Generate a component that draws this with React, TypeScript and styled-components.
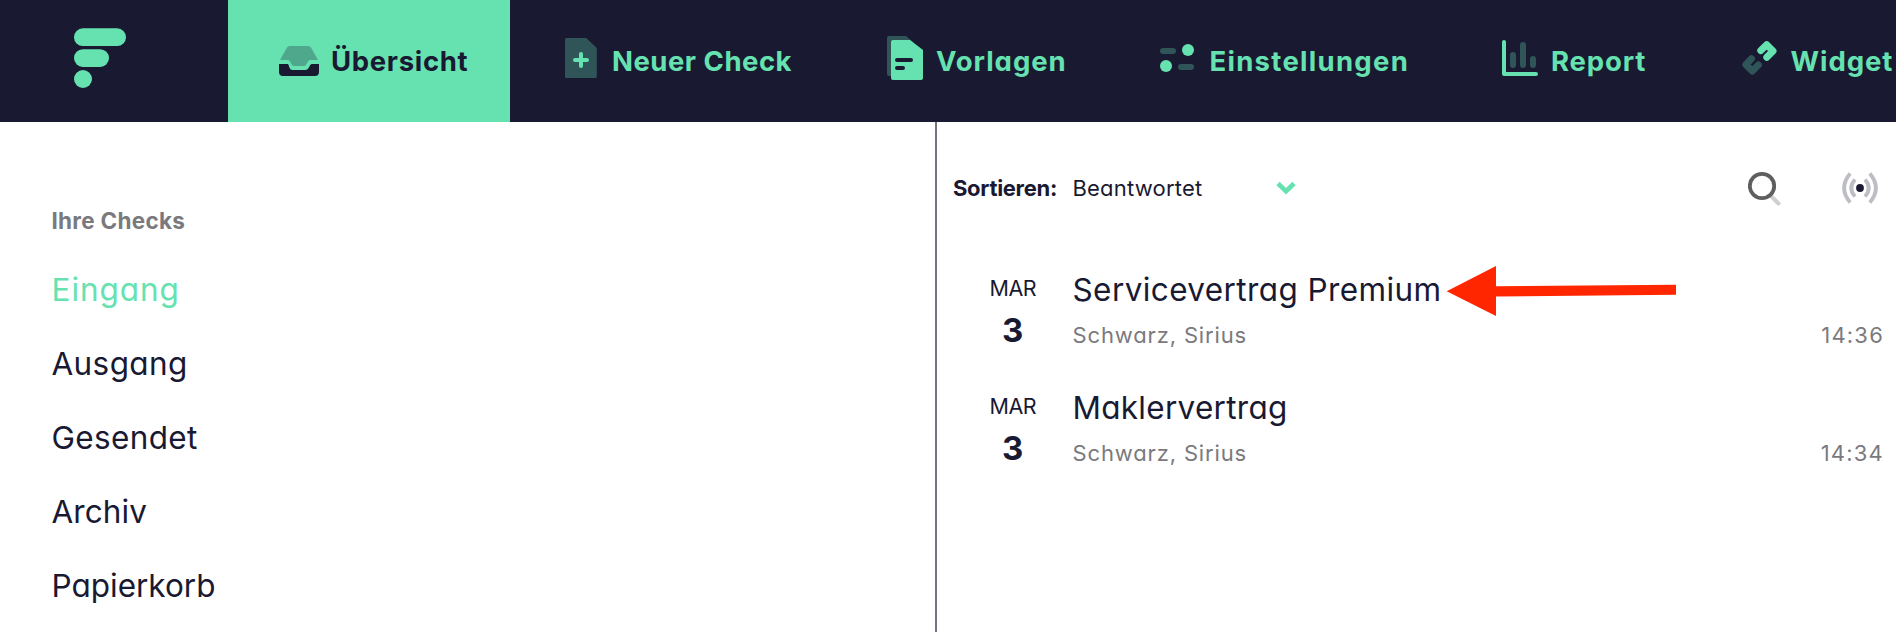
import React from 'react';
import styled, { createGlobalStyle } from 'styled-components';

const navy = '#191932';
const green = '#66e2b0';
const muted = '#2f5558';
const grey = '#7a7a7e';

const GlobalStyle = createGlobalStyle`
  * { box-sizing: border-box; }
  body {
    margin: 0;
    background: #fff;
    color: ${navy};
    font-family: Inter, "Liberation Sans", sans-serif;
    font-feature-settings: "cv11";
    overflow: hidden;
  }
`;

const Page = styled.div`
  display: flex;
  flex-direction: column;
  width: 1896px;
  height: 632px;
  overflow: hidden;
`;

const Header = styled.header`
  display: flex;
  flex: none;
  height: 122px;
  background: ${navy};
  overflow: hidden;
`;

const LogoBox = styled.div`
  flex: none;
  width: 228px;
  padding: 28px 0 0 74px;
`;

const Tab = styled.a<{ $width: number; $pad: number; $gap: number; $active?: boolean }>`
  display: flex;
  flex: none;
  align-items: center;
  width: ${p => p.$width}px;
  padding-left: ${p => p.$pad}px;
  gap: ${p => p.$gap}px;
  background: ${p => (p.$active ? green : 'transparent')};
  color: ${p => (p.$active ? navy : green)};
  white-space: nowrap;
  svg { flex: none; }
`;

const TabLabel = styled.span<{ $track: number }>`
  padding-top: 1px;
  font-size: 27.5px;
  font-weight: 700;
  line-height: 41px;
  letter-spacing: ${p => p.$track}px;
`;

const Body = styled.main`
  display: flex;
  flex: 1;
  min-height: 0;
`;

const Sidebar = styled.aside`
  flex: none;
  width: 937px;
  padding: 79px 0 0 51.5px;
  border-right: 2px solid #74747f;
`;

const SidebarTitle = styled.div`
  margin-bottom: 12px;
  color: ${grey};
  font-size: 22.5px;
  font-weight: 700;
  line-height: 40px;
  letter-spacing: 0.27px;
`;

const Folder = styled.div<{ $track: number; $active?: boolean }>`
  color: ${p => (p.$active ? green : navy)};
  font-size: 31.5px;
  line-height: 74px;
  letter-spacing: ${p => p.$track}px;
`;

const Content = styled.section`
  flex: 1;
  padding: 0 12px 0 16px;
`;

const Toolbar = styled.div`
  display: flex;
  align-items: center;
  height: 131px;
  margin-bottom: 7px;
  font-size: 22px;
  line-height: 30px;
`;

const SortLabel = styled.span`
  width: 119.5px;
  font-weight: 700;
  letter-spacing: -0.3px;
`;

const SortValue = styled.span`
  width: 203.5px;
  letter-spacing: 0.2px;
`;

const Tools = styled.div`
  display: flex;
  align-items: center;
  gap: 61px;
  margin-left: auto;
  padding-right: 6px;
`;

const Row = styled.article`
  position: relative;
  display: flex;
  height: 118px;
`;

const DateBox = styled.div`
  width: 119.5px;
  text-align: center;
`;

const Month = styled.div`
  font-size: 21.5px;
  line-height: 56px;
  letter-spacing: -0.6px;
`;

const Day = styled.div`
  font-size: 33px;
  font-weight: 700;
  line-height: 28px;
`;

const Info = styled.div`
  flex: 1;
`;

const Title = styled.div<{ $track: number }>`
  font-size: 31.5px;
  line-height: 60px;
  letter-spacing: ${p => p.$track}px;
`;

const Detail = styled.div`
  display: flex;
  justify-content: space-between;
  color: ${grey};
  font-size: 22px;
  line-height: 30px;
`;

const Person = styled.span`
  letter-spacing: 0.85px;
`;

const Time = styled.span`
  letter-spacing: 1.2px;
`;

const Arrow = styled.svg`
  position: absolute;
  left: 493px;
  top: 6px;
`;

const InboxIcon = () => (
  <svg width="40" height="52" viewBox="0 0 40 52">
    <path d="M10.5 11h19q1.6 0 2.5 1.5L39 25h-7.5q-1.7 0-2.4 1.3l-1.8 3.2q-.8 1.5-2.5 1.5h-9.6q-1.7 0-2.5-1.5l-1.8-3.2Q10.200 25 8.500 25H1L8 12.500Q8.900 11 10.500 11z" fill="#4fa88c" />
    <path d="M0 29h8.300q1 0 1.400 1.200l.7 2.300Q11.200 35 13.500 35h13q2 0 2.900-1.700l1.700-3q.7-1.300 2-1.300H40v8q0 4-4 4H4q-4 0-4-4z" fill={navy} />
  </svg>
);

const NewIcon = () => (
  <svg width="32" height="52" viewBox="0 0 32 52">
    <path d="M1.500 3H20l10 10v28.500q0 1.500-1.500 1.500h-27Q0 43 0 41.500v-37Q0 3 1.500 3z" fill={muted} transform="scale(1.060 1)" />
    <path d="M16 19v12M10 25h12" stroke={green} strokeWidth="4" strokeLinecap="round" />
  </svg>
);

const TemplateIcon = () => (
  <svg width="36" height="52" viewBox="0 0 36 52">
    <path d="M2 1h17l8 7v33H2q-2 0-2-2V3q0-2 2-2z" fill={muted} />
    <path d="M6 5h17l13 10v28q0 2-2 2H6q-2 0-2-2V7q0-2 2-2z" fill={green} />
    <path d="M10 25h14M10 33h6" stroke={navy} strokeWidth="4" strokeLinecap="round" />
  </svg>
);

const SettingsIcon = () => (
  <svg width="34" height="52" viewBox="0 0 34 52">
    <rect x="0" y="13" width="16" height="6" rx="3" fill={muted} />
    <rect x="18" y="29" width="16" height="6" rx="3" fill={muted} />
    <circle cx="28" cy="15" r="6" fill={green} />
    <circle cx="6" cy="31" r="6" fill={green} />
  </svg>
);

const ReportIcon = () => (
  <svg width="36" height="52" viewBox="0 0 36 52">
    <path d="M11 20v10M21 10v20M31 24v6" stroke={muted} strokeWidth="6" strokeLinecap="round" />
    <path d="M2 7v32h32" fill="none" stroke={green} strokeWidth="4" strokeLinecap="round" strokeLinejoin="round" />
  </svg>
);

const LinkIcon = () => (
  <svg width="36" height="52" viewBox="0 0 36 52" fill="none" strokeWidth="7" strokeLinecap="round" strokeLinejoin="round">
    <path d="M18.800 15.500L24.700 9.700L31 16L24.800 22.200" stroke={green} />
    <path d="M9.500 23.700L3.900 29.700L10.300 36L16.400 29.900" stroke={muted} />
  </svg>
);

const Chevron = () => (
  <svg width="20" height="14" viewBox="0 0 20 14">
    <path d="M2 2.500l8 7.700 8-7.700" fill="none" stroke={green} strokeWidth="4.600" />
  </svg>
);

const SearchIcon = () => (
  <svg width="33" height="36" viewBox="0 0 33 36">
    <path d="M23.500 26.500l7 7" stroke="#cfcfcf" strokeWidth="4" strokeLinecap="round" />
    <circle cx="14" cy="16" r="12.200" fill="none" stroke="#5f5f5f" strokeWidth="3.800" />
  </svg>
);

const LiveIcon = () => (
  <svg width="36" height="32" viewBox="0 0 36 32">
    <g fill="none" stroke="#bdbdc6" strokeWidth="3.800">
      <path d="M8.200 1.500Q-4 16 8.200 30.500M27.800 1.500Q40 16 27.800 30.500" />
      <path d="M13 7.500Q5.500 16 13 24.500M23 7.500Q30.500 16 23 24.500" />
    </g>
    <circle cx="18" cy="16" r="3.900" fill={navy} />
  </svg>
);

const tabs = [
  { label: 'Übersicht', Icon: InboxIcon, width: 282, pad: 51, gap: 12, track: 0.67, active: true },
  { label: 'Neuer Check', Icon: NewIcon, width: 326, pad: 55, gap: 15, track: 0.5 },
  { label: 'Vorlagen', Icon: TemplateIcon, width: 273, pad: 51, gap: 13, track: 0.95 },
  { label: 'Einstellungen', Icon: SettingsIcon, width: 342, pad: 51, gap: 15.5, track: 1.28 },
  { label: 'Report', Icon: ReportIcon, width: 240, pad: 51, gap: 13, track: 0.85 },
  { label: 'Widget', Icon: LinkIcon, width: 205, pad: 50.5, gap: 13, track: 0.95 },
];

const folders = [
  { name: 'Eingang', track: 0.95, active: true },
  { name: 'Ausgang', track: 0.38 },
  { name: 'Gesendet', track: 0.35 },
  { name: 'Archiv', track: 0.1 },
  { name: 'Papierkorb', track: 0 },
];

const checks = [
  { title: 'Servicevertrag Premium', track: 0.4, time: '14:36', marked: true },
  { title: 'Maklervertrag', track: 0.28, time: '14:34' },
];

export default function App() {
  return (
    <Page>
      <GlobalStyle />
      <Header>
        <LogoBox>
          <svg width="52" height="60" viewBox="0 0 52 60" fill={green}>
            <rect y="0.300" width="52" height="17.700" rx="8.850" />
            <rect y="21.200" width="35" height="17.700" rx="8.850" />
            <circle cx="9" cy="51" r="9" />
          </svg>
        </LogoBox>
        {tabs.map(({ label, Icon, width, pad, gap, track, active }) => (
          <Tab key={label} $width={width} $pad={pad} $gap={gap} $active={active}>
            <Icon />
            <TabLabel $track={track}>{label}</TabLabel>
          </Tab>
        ))}
      </Header>
      <Body>
        <Sidebar>
          <SidebarTitle>Ihre Checks</SidebarTitle>
          {folders.map(f => (
            <Folder key={f.name} $track={f.track} $active={f.active}>
              {f.name}
            </Folder>
          ))}
        </Sidebar>
        <Content>
          <Toolbar>
            <SortLabel>Sortieren:</SortLabel>
            <SortValue>Beantwortet</SortValue>
            <Chevron />
            <Tools>
              <SearchIcon />
              <LiveIcon />
            </Tools>
          </Toolbar>
          {checks.map(c => (
            <Row key={c.title}>
              <DateBox>
                <Month>MAR</Month>
                <Day>3</Day>
              </DateBox>
              <Info>
                <Title $track={c.track}>{c.title}</Title>
                <Detail>
                  <Person>Schwarz, Sirius</Person>
                  <Time>{c.time}</Time>
                </Detail>
              </Info>
              {c.marked && (
                <Arrow width="232" height="52" viewBox="0 0 232 52" fill="#ff2600">
                  <path d="M.7 25.200L50 0v20.300l180-1.600v10L50 30.500V50z" />
                </Arrow>
              )}
            </Row>
          ))}
        </Content>
      </Body>
    </Page>
  );
}
